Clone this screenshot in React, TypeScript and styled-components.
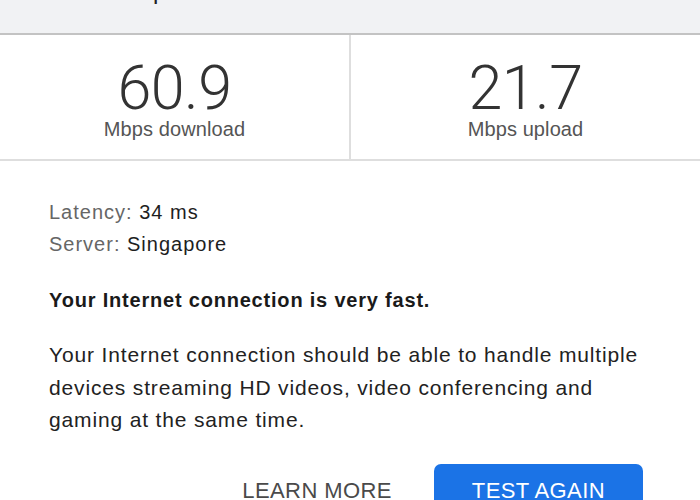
import React from "react";
import styled, { createGlobalStyle } from "styled-components";

const Global = createGlobalStyle`
  html, body { margin: 0; padding: 0; background: #ffffff; }
  body { font-family: "Liberation Sans", Arial, sans-serif; color: #222; width: 700px; overflow: hidden; }
`;

const Page = styled.div`
  width: 700px;
  display: flex;
  flex-direction: column;
`;

const Header = styled.header`
  height: 33px;
  background: #f1f2f4;
  border-bottom: 2px solid #c3c3c3;
  overflow: hidden;
  padding-left: 48px;
`;

const Title = styled.h1`
  margin: -21px 0 0 0;
  font-size: 24px;
  line-height: 24px;
  font-weight: 400;
  letter-spacing: 0.5px;
  color: #202124;
`;

const Stats = styled.section`
  display: grid;
  grid-template-columns: 351px 1fr;
  height: 124px;
  border-bottom: 2px solid #dedede;
`;

const Stat = styled.div<{ $divider?: boolean }>`
  display: flex;
  flex-direction: column;
  align-items: center;
  justify-content: center;
  padding-top: 6px;
  border-right: ${(p) => (p.$divider ? "2px solid #dedede" : "none")};
`;

const Value = styled.div`
  font-family: Roboto, "Liberation Sans", sans-serif;
  font-weight: 300;
  font-size: 61px;
  line-height: 58px;
  color: #333;
  letter-spacing: -0.5px;
`;

const Unit = styled.div`
  font-family: "Liberation Sans", Arial, sans-serif;
  font-size: 20px;
  line-height: 24px;
  color: #555;
  margin-top: 0px;
  letter-spacing: 0.1px;
`;

const Body = styled.section`
  padding: 35px 55px 0 49px;
  display: flex;
  flex-direction: column;
`;

const InfoLine = styled.div`
  font-size: 20px;
  line-height: 32px;
  letter-spacing: 1px;
  color: #1e1e1e;
`;

const InfoLabel = styled.span`
  color: #666;
`;

const Verdict = styled.p`
  margin: 24px 0 0 0;
  font-size: 20px;
  line-height: 32px;
  font-weight: 700;
  letter-spacing: 0.8px;
  color: #1a1a1a;
`;

const Description = styled.p`
  margin: 23px 0 0 0;
  font-size: 21px;
  line-height: 32.5px;
  letter-spacing: 0.85px;
  color: #222;
`;

const Actions = styled.div`
  display: flex;
  justify-content: flex-end;
  gap: 4px;
  margin-top: 27px;
  margin-right: 2px;
`;

const Button = styled.button<{ $primary?: boolean }>`
  height: 54px;
  padding: 0 38px;
  border: none;
  border-radius: 7px;
  font-family: "Liberation Sans", Arial, sans-serif;
  font-size: 22px;
  letter-spacing: 0.4px;
  background: ${(p) => (p.$primary ? "#1b73e6" : "transparent")};
  color: ${(p) => (p.$primary ? "#ffffff" : "#4a4a4a")};
  cursor: pointer;
`;

export default function App() {
  return (
    <>
      <Global />
      <Page>
        <Header>
          <Title>Internet speed test</Title>
        </Header>
        <Stats>
          <Stat $divider>
            <Value>60.9</Value>
            <Unit>Mbps download</Unit>
          </Stat>
          <Stat>
            <Value>21.7</Value>
            <Unit>Mbps upload</Unit>
          </Stat>
        </Stats>
        <Body>
          <InfoLine>
            <InfoLabel>Latency:</InfoLabel> 34 ms
          </InfoLine>
          <InfoLine>
            <InfoLabel>Server:</InfoLabel> Singapore
          </InfoLine>
          <Verdict>Your Internet connection is very fast.</Verdict>
          <Description>
            Your Internet connection should be able to handle multiple devices streaming HD videos, video
            conferencing and gaming at the same time.
          </Description>
          <Actions>
            <Button>LEARN MORE</Button>
            <Button $primary>TEST AGAIN</Button>
          </Actions>
        </Body>
      </Page>
    </>
  );
}
